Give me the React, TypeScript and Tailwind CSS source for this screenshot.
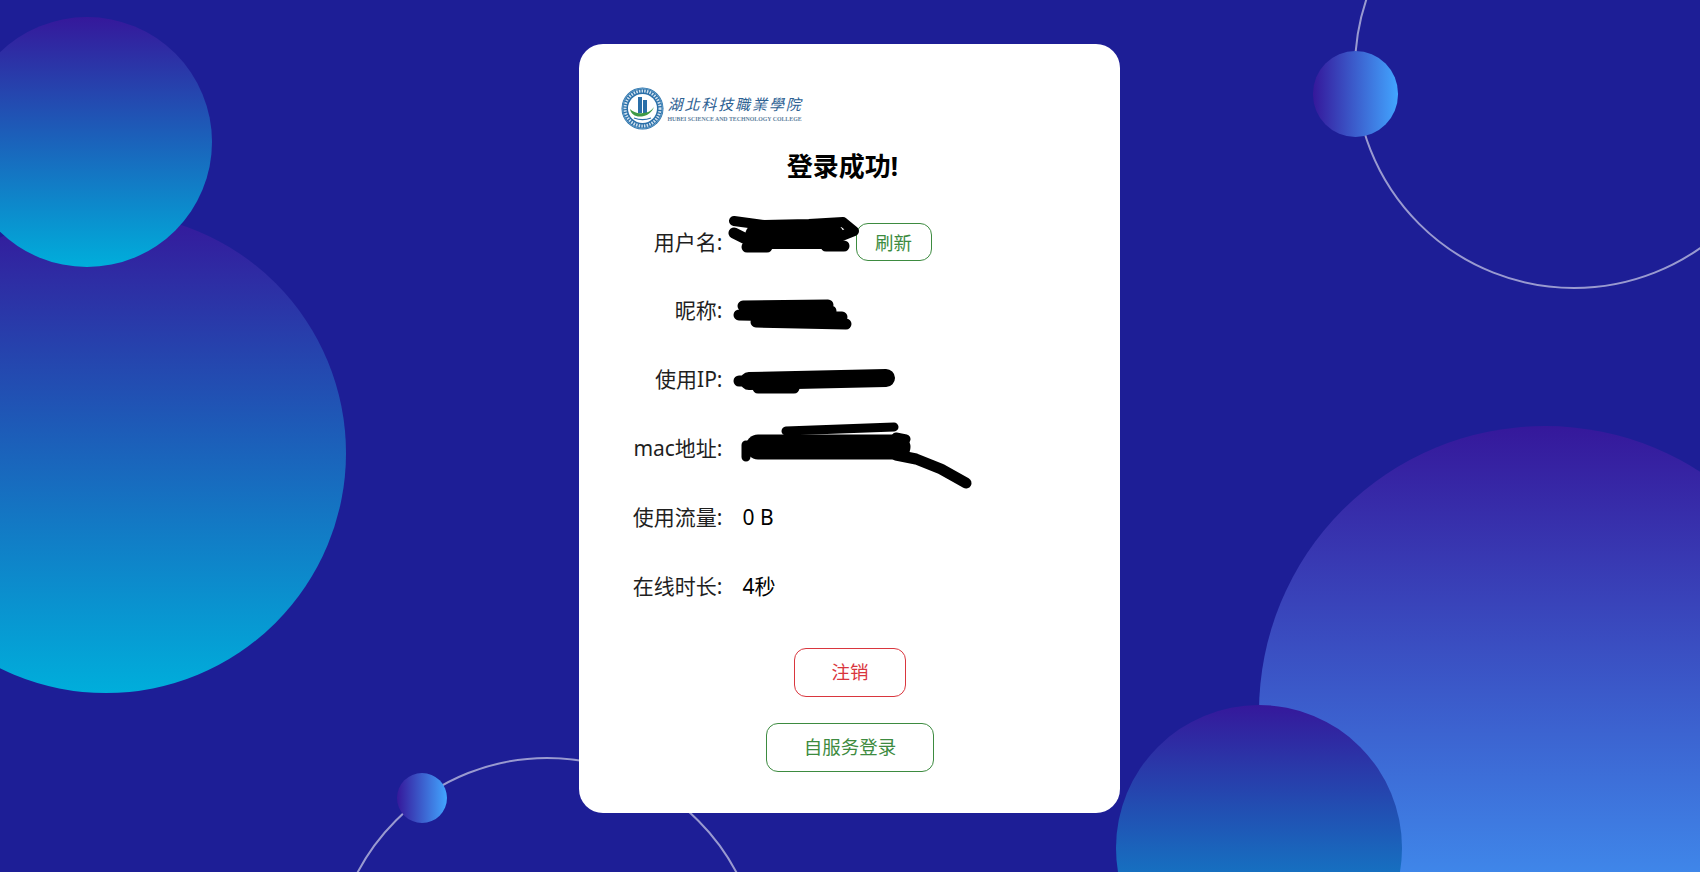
const rows = [
  { label: "用户名:", refresh: true },
  { label: "昵称:" },
  { label: "使用IP:" },
  { label: "mac地址:" },
  { label: "使用流量:", value: "0 B" },
  { label: "在线时长:", value: "4秒" },
];

function Logo() {
  return (
    <div className="flex items-center gap-[4px] w-[182px] h-[47px]">
      <svg width="43" height="43" viewBox="0 0 43 43" className="shrink-0">
        <circle cx="21.5" cy="21.5" r="21" fill="#2a6fa8" />
        <circle cx="21.5" cy="21.5" r="20" fill="none" stroke="#5f9cc8" strokeWidth="1" />
        <circle cx="21.5" cy="21.5" r="17.5" fill="none" stroke="#cfe0ee" strokeWidth="3" strokeDasharray="1.5 1.2" />
        <circle cx="21.5" cy="21.5" r="14.5" fill="#ffffff" />
        <path d="M17 10h4v16h-4zM22 13h4v13h-4z" fill="#2a6fa8" />
        <path d="M9 22c1 6 7 9 14 7 4-1 8-4 10-9-2 3-6 6-11 6-5 1-10-1-13-4z" fill="#3f9a45" />
        <path d="M13 31c5 2 12 2 17 0" stroke="#2a6fa8" strokeWidth="1.2" fill="none" />
      </svg>
      <div className="flex flex-col">
        <span className="text-[15px] leading-[18px] italic tracking-[1.9px] whitespace-nowrap text-[#2d6193] font-['Noto_Sans_CJK_TC',sans-serif]">
          湖北科技職業學院
        </span>
        <span className="mt-[3px] text-[5.85px] leading-[7px] font-bold whitespace-nowrap text-[#5d7f9e] font-['Liberation_Serif',serif]">
          HUBEI SCIENCE AND TECHNOLOGY COLLEGE
        </span>
      </div>
    </div>
  );
}

// black marker strokes over the redacted values, in page coordinates
function Scribbles() {
  return (
    <svg
      className="absolute inset-0 pointer-events-none"
      width="541"
      height="769"
      viewBox="578 44 541 769"
      fill="none"
      stroke="#000"
      strokeLinecap="round"
      strokeLinejoin="round"
    >
      <path d="M757 236h73" strokeWidth="26" />
      <path d="M733 221l30 4 45-1 34-2 11 9-15 6" strokeWidth="10" />
      <path d="M733 233l16 8M746 247h20M825 246h18" strokeWidth="11" />
      <path d="M742 306l85-1M738 315l103 2M755 322l90 2M750 311h80" strokeWidth="11" />
      <path d="M748 381l137-3" strokeWidth="18" />
      <path d="M738 381h12M757 388h36" strokeWidth="11" />
      <path d="M757 447h140" strokeWidth="25" />
      <path d="M745 445v12M785 431l108-4M895 437l10 2" strokeWidth="9" />
      <path d="M895 455l20 4 25 10 25 14" strokeWidth="11" />
    </svg>
  );
}

export default function App() {
  return (
    <div className="relative h-[872px] overflow-hidden bg-[#1d1e96] font-['Noto_Sans','Noto_Sans_CJK_SC',sans-serif]">
      <div className="absolute left-[-134px] top-[213px] w-[480px] h-[480px] rounded-full bg-linear-to-b/srgb from-[#35189b] to-[#00aedb]" />
      <div className="absolute left-[-38px] top-[17px] w-[250px] h-[250px] rounded-full bg-linear-to-b/srgb from-[#35189b] to-[#00aedb]" />
      <div className="absolute left-[1259px] top-[426px] w-[572px] h-[572px] rounded-full bg-linear-to-b/srgb from-[#35189b] to-[#42a5ff]" />
      <div className="absolute left-[1116px] top-[705px] w-[286px] h-[286px] rounded-full bg-linear-to-b/srgb from-[#35189b] to-[#00aedb]" />
      <div className="absolute left-[1354px] top-[-151px] w-[440px] h-[440px] rounded-full border-2 border-white/55" />
      <div className="absolute left-[332px] top-[757px] w-[430px] h-[430px] rounded-full border-2 border-white/55" />
      <div className="absolute left-[1313px] top-[51px] w-[85px] h-[86px] rounded-full bg-linear-to-r/srgb from-[#35189b] to-[#42a5ff]" />
      <div className="absolute left-[397px] top-[773px] w-[50px] h-[50px] rounded-full bg-linear-to-r/srgb from-[#35189b] to-[#42a5ff]" />

      <div className="relative flex justify-center pt-[44px] pr-[2px]">
        <div className="relative flex flex-col w-[541px] h-[769px] rounded-[24px] bg-white pt-[41px]">
          <div className="pl-[42px]">
            <Logo />
          </div>
          <h1 className="mt-[14px] h-[40px] pr-[13px] text-center text-[26px] leading-[40px] font-bold text-black">
            登录成功!
          </h1>
          <div className="mt-[22px] flex flex-col">
            {rows.map((row) => (
              <div key={row.label} className="flex items-center gap-[20px] h-[68.8px] text-[21px] text-[#1f1f1f]">
                <span className="w-[144px] text-right whitespace-nowrap">{row.label}</span>
                {row.value && <span className="text-black">{row.value}</span>}
                {row.refresh && (
                  <button className="ml-[113px] w-[76px] h-[38px] rounded-[12px] border border-[#3d8b40] text-[18.5px] text-[#3d8b40] bg-white">
                    刷新
                  </button>
                )}
              </div>
            ))}
          </div>
          <div className="mt-[27px] flex flex-col items-center gap-[26px] pl-[2px]">
            <button className="w-[112px] h-[49px] rounded-[12px] border border-[#d9363e] text-[18.5px] text-[#d9363e] bg-white">
              注销
            </button>
            <button className="w-[168px] h-[49px] rounded-[12px] border border-[#3d8b40] text-[18.5px] text-[#3d8b40] bg-white">
              自服务登录
            </button>
          </div>
          <Scribbles />
        </div>
      </div>
    </div>
  );
}
